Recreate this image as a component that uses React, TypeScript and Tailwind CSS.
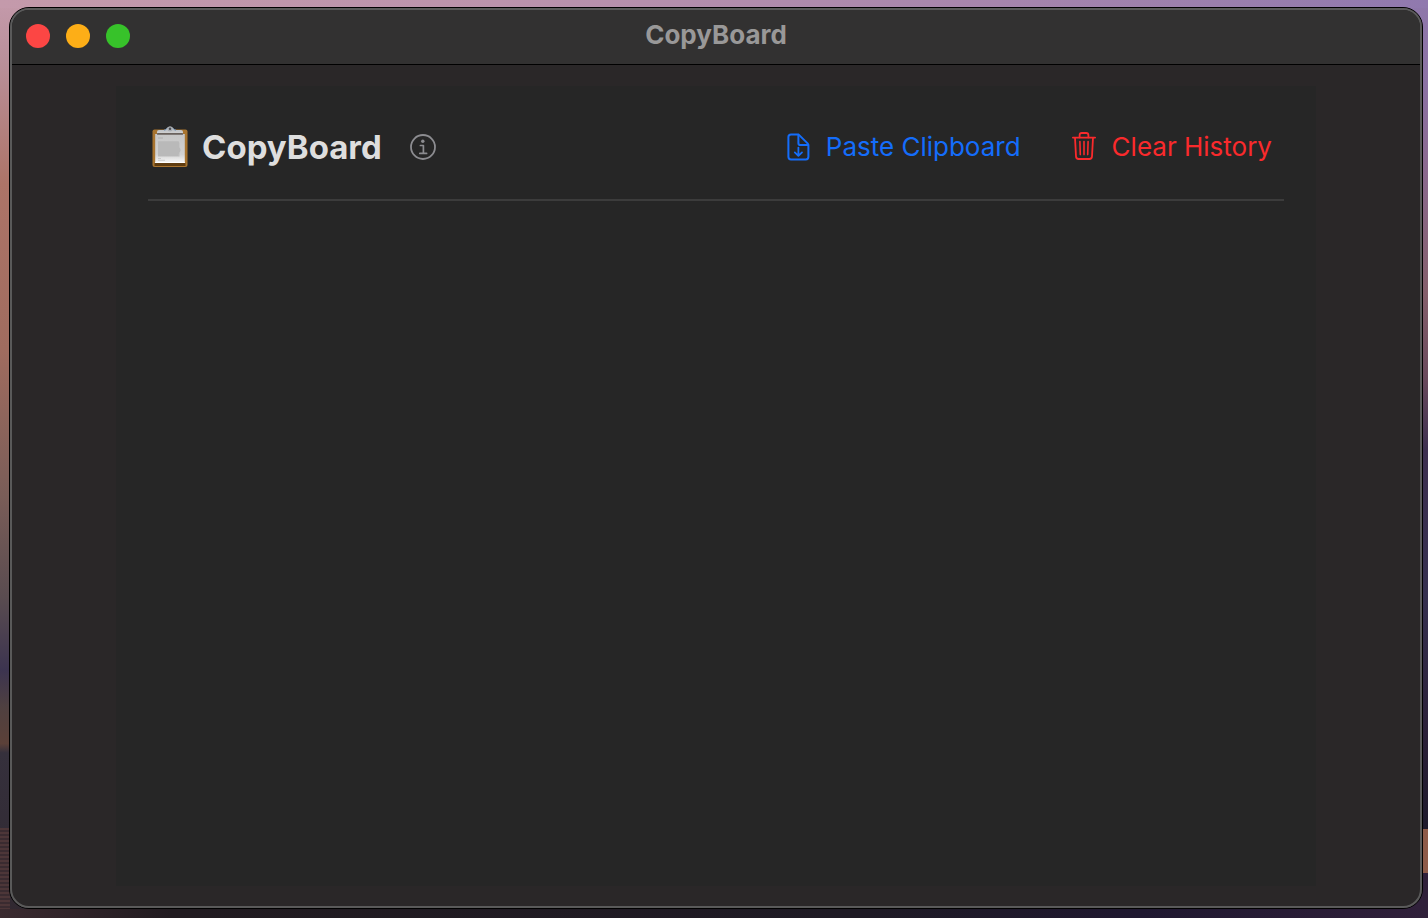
import React from "react";

function ClipboardIcon() {
  return (
    <svg aria-hidden="true" viewBox="0 0 36 42" className="h-[42px] w-9 shrink-0">
      <defs>
        <linearGradient id="paper" x1="0" y1="0" x2="0" y2="1">
          <stop offset="0" stopColor="#c6c6c6" />
          <stop offset="0.7" stopColor="#d2d2d2" />
          <stop offset="1" stopColor="#f8f8f8" />
        </linearGradient>
        <linearGradient id="clip" x1="0" y1="0" x2="0" y2="1">
          <stop offset="0" stopColor="#b0b6bc" />
          <stop offset="1" stopColor="#d4d4d4" />
        </linearGradient>
      </defs>
      <rect x="0.5" y="3.5" width="35" height="37.5" rx="2" fill="#a8742f" />
      <rect x="2.5" y="37" width="31" height="3" fill="#5f3c10" />
      <rect x="3.2" y="8" width="29.6" height="29" fill="url(#paper)" />
      <rect x="3.2" y="36" width="29.6" height="1" fill="#ffffff" />
      <path d="M6 12h5" stroke="#b0b0b0" strokeWidth="1.2" />
      <path d="M6 32.5h3M6 34.3h7" stroke="#c2c2c2" strokeWidth="0.8" />
      <path d="M6 15h20.5l1 2v4l1.3 3-1.3 3v3.500H6z" fill="#bdbdbd" />
      <path d="M6 17h21M6 19h21M6 21h21M6 23h22M6 25h22M6 27h21M6 29h20" stroke="#b3b3b3" strokeWidth="0.6" />
      <path d="M5 8V6q0-2 2-2h5q2 0 3-2l1-1h4l1 1q1 2 3 2h5q2 0 2 2v2z" fill="url(#clip)" />
      <path d="M12 4.200q2 0 3-2M24 4.200q-2 0-3-2" stroke="#6f8fb5" fill="none" />
      <rect x="5" y="7" width="26" height="1.800" rx="0.6" fill="#6a625d" />
      <circle cx="18" cy="2.800" r="1.900" fill="#4b4c4f" stroke="#a9adb3" strokeWidth="1.300" />
    </svg>
  );
}

function InfoIcon() {
  return (
    <svg aria-hidden="true" viewBox="0 0 26 26" className="size-[26px]" fill="none" stroke="currentColor">
      <circle cx="13" cy="13" r="12" strokeWidth="1.8" />
      <circle cx="12.8" cy="7.2" r="1.7" fill="currentColor" stroke="none" />
      <path d="M10.4 11.500h3v7.800M9.800 19.400h6.800" strokeWidth="1.7" strokeLinecap="round" strokeLinejoin="round" />
    </svg>
  );
}

function PasteIcon() {
  return (
    <svg
      aria-hidden="true"
      viewBox="0 0 24 28"
      className="h-7 w-6"
      fill="none"
      stroke="currentColor"
      strokeWidth="2"
      strokeLinecap="round"
      strokeLinejoin="round"
    >
      <path d="M12 1.4H5Q2.400 1.400 2.400 4v19.800q0 2.600 2.600 2.600h14.800q2.600 0 2.600-2.600V12.200q0-1-.8-1.800l-8.400-8.300q-.6-.7-1.200-.7z" />
      <path d="M12.400 1.800v8.400q0 1.800 1.800 1.800h8" />
      <path d="M12.400 14.600v8M8.800 19.400l3.600 3.500 3.600-3.500" strokeWidth="1.8" />
    </svg>
  );
}

function TrashIcon() {
  return (
    <svg
      aria-hidden="true"
      viewBox="0 0 24 30"
      className="h-[30px] w-6"
      fill="none"
      stroke="currentColor"
      strokeWidth="1.8"
      strokeLinecap="round"
      strokeLinejoin="round"
    >
      <path d="M.9 5.600h22.200" />
      <path d="M7.600 5.400V3.200q0-2.200 2.200-2.200h4.400q2.200 0 2.200 2.200v2.200" />
      <path d="M3 5.800l1 18.600q.1 2.600 2.600 2.600h10.800q2.500 0 2.600-2.600l1-18.600" />
      <path d="M7.900 9.600l.4 13M12 9.600v13M16.100 9.600l-.4 13" strokeWidth="1.6" />
    </svg>
  );
}

export default function App() {
  return (
    <div className="flex min-h-screen bg-[linear-gradient(90deg,#c49aab,#bb93ac_35%,#a685ac_70%,#9079ae),linear-gradient(90deg,#3a2a2f,#211b20_12%,#1e1a24_60%,#1f1830_80%,#30203a),repeating-linear-gradient(180deg,#4d3638_0px,#4d3638_2px,#3a2b30_2px,#3a2b30_4px),linear-gradient(180deg,#c49aab,#b98f99_7%,#ad7468_20%,#a06c5f_38%,#7a5d58_54%,#5a4c50_65%,#3c3450_73%,#4f4040_77%,#5b4038_81%,#35303c_82%,#302830),linear-gradient(180deg,#8f78ab,#8b72a4_9%,#8b6a90_18%,#845f6b_32%,#6a4a5c_41%,#3d3050_49%,#35304f_65%,#2b2038_80%,#1e1a2c_90.3%,#8d5a48_90.3%,#8d5a48_95.1%,#30203a_95.1%)] bg-[size:100%_8px,100%_9px,10px_90px,50%_100%,50%_100%] bg-[position:left_top,left_bottom,left_bottom,left_top,right_top] bg-no-repeat pt-[7px] pr-[5px] pb-[9px] pl-[9px] font-['Inter',sans-serif]">
      <div className="flex flex-1 rounded-[20px] border border-black bg-[#2a2728]">
        <div className="flex flex-1 flex-col overflow-hidden rounded-[19px] border-2 border-[#5a5a5a]">
          <header className="grid h-[55px] shrink-0 grid-cols-[1fr_auto_1fr] items-center border-b border-black bg-[#323131] px-[14px] pb-0.5">
            <div className="flex gap-4">
              <button aria-label="Close" className="size-6 rounded-full bg-[#fc4644]" />
              <button aria-label="Minimize" className="size-6 rounded-full bg-[#fdae17]" />
              <button aria-label="Zoom" className="size-6 rounded-full bg-[#37c22a]" />
            </div>
            <div className="pb-0.5 text-[26px] leading-8 font-bold text-[#999898]">CopyBoard</div>
          </header>
          <main className="flex flex-1 flex-col px-[104px] pt-[21px] pb-5">
            <section className="flex-1 bg-[#262626] px-8">
              <div className="flex h-[115px] items-center justify-between border-b-2 border-[#3c3c3c] pt-2 pr-3 pl-1">
                <div className="flex items-center">
                  <ClipboardIcon />
                  <h1 className="ml-[14px] text-[33px] leading-10 font-bold text-[#dedede]">CopyBoard</h1>
                  <button aria-label="About" className="ml-7 text-[#8c8c90]">
                    <InfoIcon />
                  </button>
                </div>
                <div className="flex items-center gap-[51px] text-[26px] leading-8">
                  <button className="flex items-center gap-4 text-[#146dfb]">
                    <PasteIcon />
                    Paste Clipboard
                  </button>
                  <button className="flex items-center gap-4 text-[#fa2a2c]">
                    <TrashIcon />
                    Clear History
                  </button>
                </div>
              </div>
            </section>
          </main>
        </div>
      </div>
    </div>
  );
}
